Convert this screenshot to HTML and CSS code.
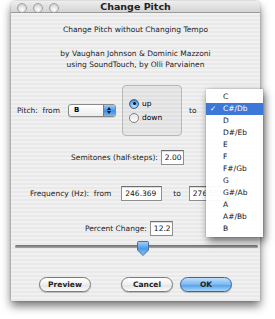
FILE: index.html
```html
<!DOCTYPE html>
<html lang="en">

<head>
  <meta charset="UTF-8" />
  <title>Change Pitch</title>
  <link rel="stylesheet" href="styles.css">
</head>

<body>
  <div class="window">
    <div class="titlebar">
      <div class="lights"><span></span><span></span><span></span></div>
      <div class="title">Change Pitch</div>
    </div>

    <div class="content">
      <p class="headline">Change Pitch without Changing Tempo</p>
      <p class="credits">by Vaughan Johnson &amp; Dominic Mazzoni<br>using SoundTouch, by Olli Parviainen</p>

      <div class="pitch-row">
        <span class="label">Pitch:&nbsp; from</span>
        <div class="popup">
          <span class="popup-value">B</span>
          <span class="popup-arrows"></span>
        </div>
        <div class="radio-box">
          <div class="radio-item"><span class="radio checked"></span>up</div>
          <div class="radio-item"><span class="radio"></span>down</div>
        </div>
        <span class="label to">to</span>
      </div>

      <div class="field-row semis">
        <span class="label">Semitones (half-steps):</span>
        <span class="textbox w-small">2.00</span>
      </div>

      <div class="field-row freq">
        <span class="label">Frequency (Hz):&nbsp; from</span>
        <span class="textbox w-wide freq-from">246.369</span>
        <span class="label freq-to">to</span>
        <span class="textbox w-wide">276.555</span>
      </div>

      <div class="field-row pct">
        <span class="label">Percent Change:</span>
        <span class="textbox w-small">12.2</span>
      </div>

      <div class="slider">
        <div class="track"></div>
        <div class="thumb" style="left: 122px;">
          <svg width="12" height="15" viewBox="0 0 12 15">
            <defs>
              <linearGradient id="tg" x1="0" y1="0" x2="0" y2="1">
                <stop offset="0" stop-color="#a9d2f7" />
                <stop offset="0.5" stop-color="#4b9be8" />
                <stop offset="1" stop-color="#8cc4f5" />
              </linearGradient>
            </defs>
            <path d="M1.5 0.5 H10.5 Q11.5 0.5 11.5 1.5 V9 L6 14.5 L0.5 9 V1.5 Q0.5 0.5 1.5 0.5 Z" fill="url(#tg)" stroke="#4a6f9a" stroke-width="1" />
          </svg>
        </div>
      </div>

      <div class="buttons">
        <button class="aqua-button">Preview</button>
        <div class="button-pair">
          <button class="aqua-button">Cancel</button>
          <button class="aqua-button default">OK</button>
        </div>
      </div>
    </div>

    <ul class="menu">
      <li>C</li>
      <li class="selected"><span class="check">✓</span>C#/Db</li>
      <li>D</li>
      <li>D#/Eb</li>
      <li>E</li>
      <li>F</li>
      <li>F#/Gb</li>
      <li>G</li>
      <li>G#/Ab</li>
      <li>A</li>
      <li>A#/Bb</li>
      <li>B</li>
    </ul>
  </div>
</body>

</html>
```

FILE: styles.css
```css
* {
  margin: 0;
  padding: 0;
  box-sizing: border-box;
}

body {
  width: 275px;
  height: 319px;
  background: #ffffff;
  font-family: 'DejaVu Sans', 'Liberation Sans', sans-serif;
  font-size: 7.5px;
  color: #000000;
  overflow: hidden;
}

.window {
  position: relative;
  margin-left: 11px;
  margin-top: 1px;
  width: 249px;
  height: 300px;
  border-radius: 5px 5px 0 0;
  background: repeating-linear-gradient(#f1f1f1 0 2px, #e9e9e9 2px 4px);
  box-shadow: 0 5px 10px rgba(0, 0, 0, 0.55), 0 0 2px rgba(0, 0, 0, 0.3);
}

.titlebar {
  position: relative;
  height: 12px;
  border-radius: 5px 5px 0 0;
  background: linear-gradient(#eeeeee, #d4d4d4);
  border-bottom: 1px solid #9a9a9a;
  display: flex;
  align-items: center;
  justify-content: center;
}

.lights {
  position: absolute;
  left: 6px;
  top: 2px;
  display: flex;
  gap: 6px;
}

.lights span {
  width: 10px;
  height: 10px;
  border-radius: 50%;
  border: 1px solid #a0a0a0;
  background: radial-gradient(circle at 50% 70%, #ffffff, #dcdcdc 60%, #c4c4c4);
}

.title {
  font-weight: bold;
  font-size: 9.5px;
  color: #222222;
}

.content {
  display: flex;
  flex-direction: column;
}

.headline {
  margin-top: 11px;
  line-height: 12px;
  text-align: center;
  color: #222222;
}

.credits {
  margin-top: 12px;
  line-height: 11px;
  text-align: center;
  color: #222222;
}

.pitch-row {
  margin-top: 15px;
  height: 51px;
  display: flex;
  align-items: center;
  padding-left: 6px;
}

.label {
  color: #222222;
  white-space: nowrap;
}

.popup {
  margin-left: 8px;
  width: 48px;
  height: 13px;
  border: 1px solid #8a8a8a;
  border-radius: 3px;
  background: linear-gradient(#ffffff, #ececec);
  display: flex;
  overflow: hidden;
  box-shadow: 0 1px 1px rgba(0, 0, 0, 0.15);
}

.popup-value {
  flex: 1;
  padding-left: 5px;
  line-height: 11px;
  font-weight: bold;
  font-size: 7px;
}

.popup-arrows {
  width: 12px;
  position: relative;
  background: linear-gradient(#a3cdf5, #3f8fe0 55%, #79b6f0);
  border-left: 1px solid #5a82b0;
}

.popup-arrows::before,
.popup-arrows::after {
  content: "";
  position: absolute;
  left: 3px;
  border-left: 2.5px solid transparent;
  border-right: 2.5px solid transparent;
}

.popup-arrows::before {
  top: 2px;
  border-bottom: 3px solid #111111;
}

.popup-arrows::after {
  bottom: 2px;
  border-top: 3px solid #111111;
}

.radio-box {
  margin-left: 6px;
  width: 60px;
  height: 51px;
  border: 1px solid #b8b8b8;
  border-radius: 4px;
  background: rgba(0, 0, 0, 0.035);
  display: flex;
  flex-direction: column;
  justify-content: center;
  gap: 4px;
  padding-left: 6px;
}

.radio-item {
  display: flex;
  align-items: center;
  gap: 3px;
  line-height: 10px;
}

.radio {
  width: 10px;
  height: 10px;
  border-radius: 50%;
  border: 1px solid #808080;
  background: linear-gradient(#e6e6e6, #ffffff);
  position: relative;
}

.radio.checked {
  border-color: #3b6593;
  background: radial-gradient(circle at 50% 75%, #c9e4fb, #4e9ae6 70%, #2e6fbf);
}

.radio.checked::after {
  content: "";
  position: absolute;
  left: 2.5px;
  top: 2.5px;
  width: 3px;
  height: 3px;
  border-radius: 50%;
  background: #111111;
}

.to {
  margin-left: 7px;
}

.field-row {
  display: flex;
  align-items: center;
  height: 15px;
}

.semis {
  margin-top: 14px;
  padding-left: 60px;
  gap: 3px;
}

.freq {
  margin-top: 21px;
  padding-left: 19px;
}

.freq-from {
  margin-left: 10px;
}

.freq-to {
  margin-left: 11px;
  margin-right: 8px;
}

.pct {
  margin-top: 20px;
  padding-left: 74px;
  gap: 3px;
}

.textbox {
  height: 15px;
  border: 1px solid #8e8e8e;
  border-top-color: #6e6e6e;
  background: #ffffff;
  box-shadow: inset 0 1px 1px rgba(0, 0, 0, 0.15);
  padding-left: 3px;
  line-height: 13px;
  color: #111111;
}

.w-small {
  width: 23px;
}

.w-wide {
  width: 41px;
}

.slider {
  position: relative;
  margin-top: 5px;
  height: 15px;
  margin-left: 4px;
  width: 243px;
}

.track {
  position: absolute;
  left: 0;
  right: 0;
  top: 4px;
  height: 3px;
  border-radius: 2px;
  background: linear-gradient(#6c6c6c, #a8a8a8);
}

.thumb {
  position: absolute;
  top: 0;
  height: 15px;
}

.buttons {
  margin-top: 21px;
  display: flex;
  padding-left: 28px;
  gap: 30px;
}

.button-pair {
  display: flex;
  gap: 7px;
}

.aqua-button {
  width: 52px;
  height: 15px;
  border-radius: 8px;
  border: 1px solid #7a7a7a;
  background: linear-gradient(#ffffff, #f0f0f0 50%, #e2e2e2 51%, #fbfbfb);
  font-family: 'DejaVu Sans', 'Liberation Sans', sans-serif;
  font-size: 7.5px;
  font-weight: bold;
  color: #222222;
  box-shadow: 0 1px 1px rgba(0, 0, 0, 0.2);
}

.aqua-button.default {
  border-color: #3c64a0;
  background: linear-gradient(#bfe0fb, #7ab8f0 50%, #4e9de8 51%, #a6d6fb);
}

.menu {
  position: absolute;
  left: 195px;
  top: 88px;
  width: 57px;
  padding: 2px 0;
  list-style: none;
  background: rgba(255, 255, 255, 0.95);
  box-shadow: 2px 4px 8px rgba(0, 0, 0, 0.55), 0 0 1px rgba(0, 0, 0, 0.4);
}

.menu li {
  position: relative;
  height: 12px;
  line-height: 12px;
  padding-left: 17px;
  color: #111111;
}

.menu li.selected {
  background: #3d78d8;
  color: #ffffff;
}

.check {
  position: absolute;
  left: 4px;
}
```
